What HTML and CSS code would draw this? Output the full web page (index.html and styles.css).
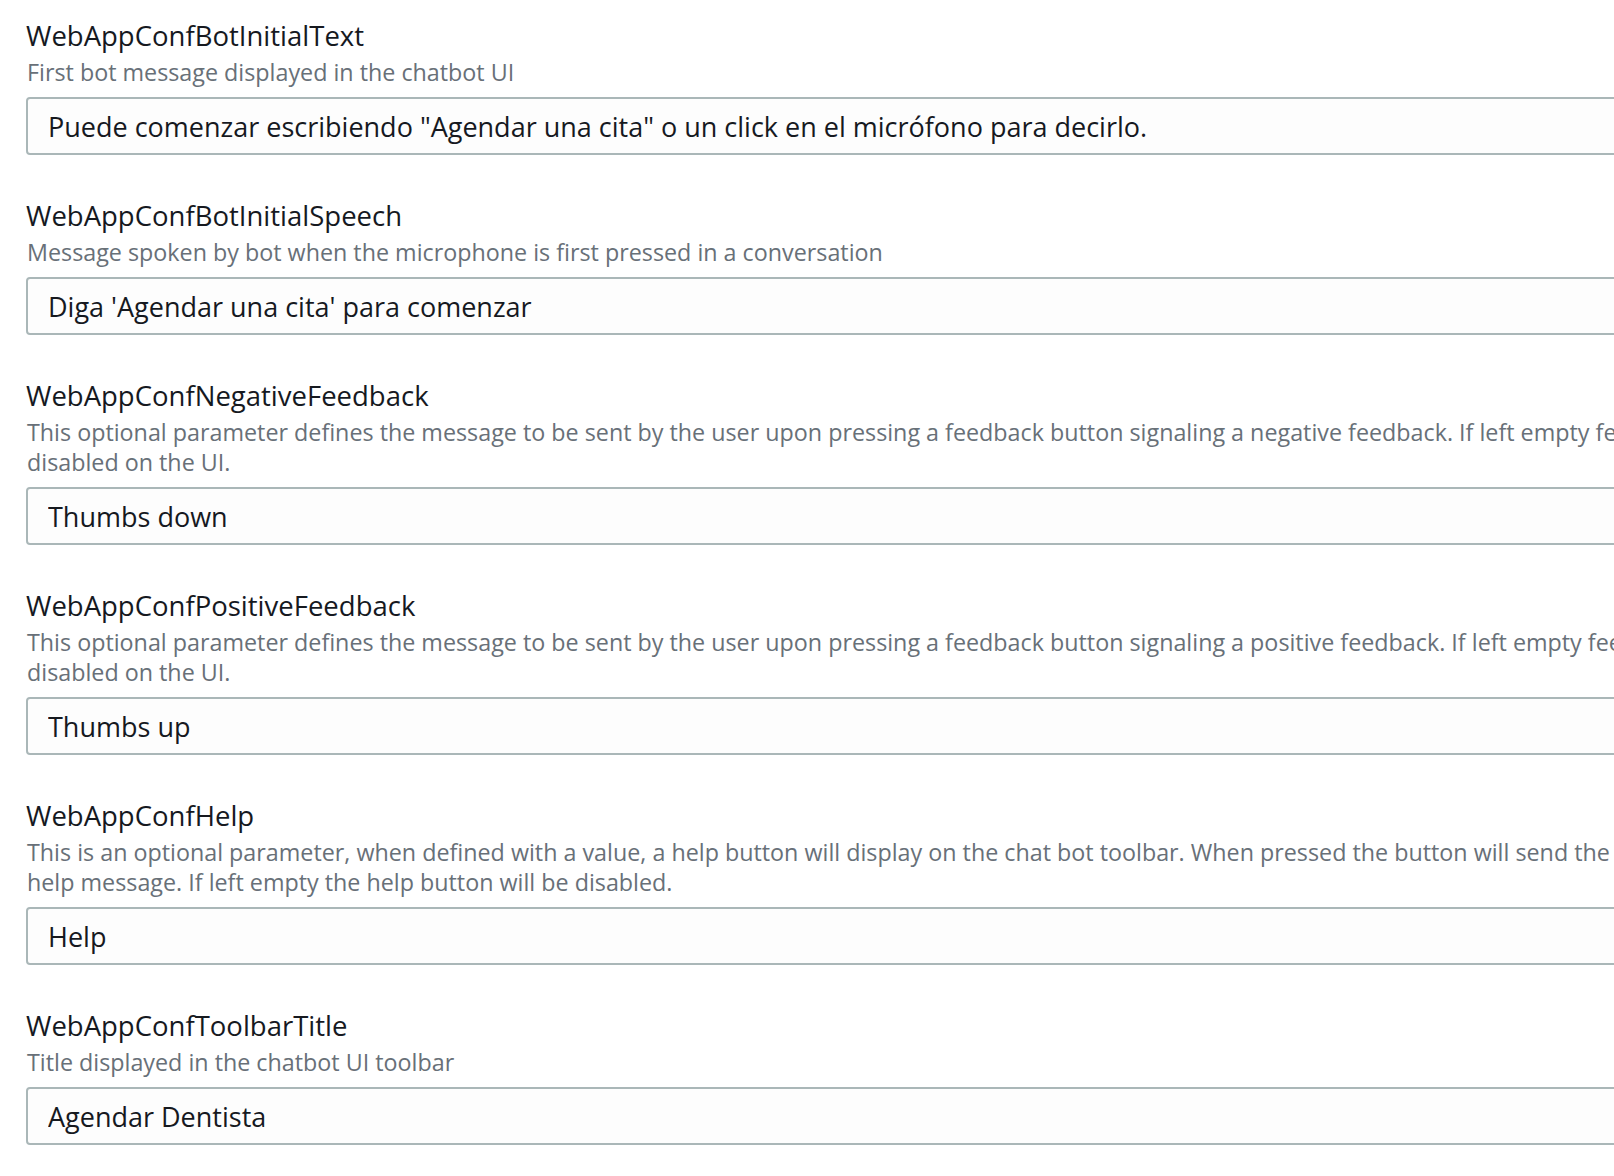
FILE: index.html
```html
<!DOCTYPE html>
<html lang="en">
<head>
<meta charset="utf-8">
<title>Parameters</title>
<link rel="stylesheet" href="styles.css">
</head>
<body>
<form class="params">
  <div class="field">
    <label class="field-title">WebAppConfBotInitialText</label>
    <p class="field-desc">First bot message displayed in the chatbot UI</p>
    <input class="field-input" type="text" value="Puede comenzar escribiendo &quot;Agendar una cita&quot; o un click en el micrófono para decirlo.">
  </div>
  <div class="field">
    <label class="field-title">WebAppConfBotInitialSpeech</label>
    <p class="field-desc">Message spoken by bot when the microphone is first pressed in a conversation</p>
    <input class="field-input" type="text" value="Diga 'Agendar una cita' para comenzar">
  </div>
  <div class="field">
    <label class="field-title">WebAppConfNegativeFeedback</label>
    <p class="field-desc">This optional parameter defines the message to be sent by the user upon pressing a feedback button signaling a negative feedback. If left empty feedback buttons will be<br>disabled on the UI.</p>
    <input class="field-input" type="text" value="Thumbs down">
  </div>
  <div class="field">
    <label class="field-title">WebAppConfPositiveFeedback</label>
    <p class="field-desc">This optional parameter defines the message to be sent by the user upon pressing a feedback button signaling a positive feedback. If left empty feedback buttons will be<br>disabled on the UI.</p>
    <input class="field-input" type="text" value="Thumbs up">
  </div>
  <div class="field">
    <label class="field-title">WebAppConfHelp</label>
    <p class="field-desc">This is an optional parameter, when defined with a value, a help button will display on the chat bot toolbar. When pressed the button will send the<br>help message. If left empty the help button will be disabled.</p>
    <input class="field-input" type="text" value="Help">
  </div>
  <div class="field">
    <label class="field-title">WebAppConfToolbarTitle</label>
    <p class="field-desc">Title displayed in the chatbot UI toolbar</p>
    <input class="field-input" type="text" value="Agendar Dentista">
  </div>
</form>
</body>
</html>
```
FILE: styles.css
```css
html, body {
  margin: 0;
  padding: 0;
  background: #ffffff;
  overflow: hidden;
}

body {
  font-family: "Open Sans", Roboto, "Liberation Sans", sans-serif;
  color: #16191f;
}

.params {
  width: 2200px;
  padding: 19px 0 0 26px;
  display: flex;
  flex-direction: column;
  gap: 44px;
}

.field {
  display: flex;
  flex-direction: column;
}

.field-title {
  display: block;
  font-size: 27.5px;
  line-height: 34px;
  color: #16191f;
}

.field-desc {
  margin: 4px 0 10px 1px;
  font-size: 23.3px;
  line-height: 30px;
  color: #687078;
  white-space: nowrap;
}

.field-input {
  box-sizing: border-box;
  width: 100%;
  height: 58px;
  margin: 0;
  padding: 0 20px;
  border: 2px solid #aab7b8;
  border-radius: 4px;
  background: #fdfdfd;
  font-family: inherit;
  font-size: 27px;
  color: #16191f;
  outline: none;
}
```
